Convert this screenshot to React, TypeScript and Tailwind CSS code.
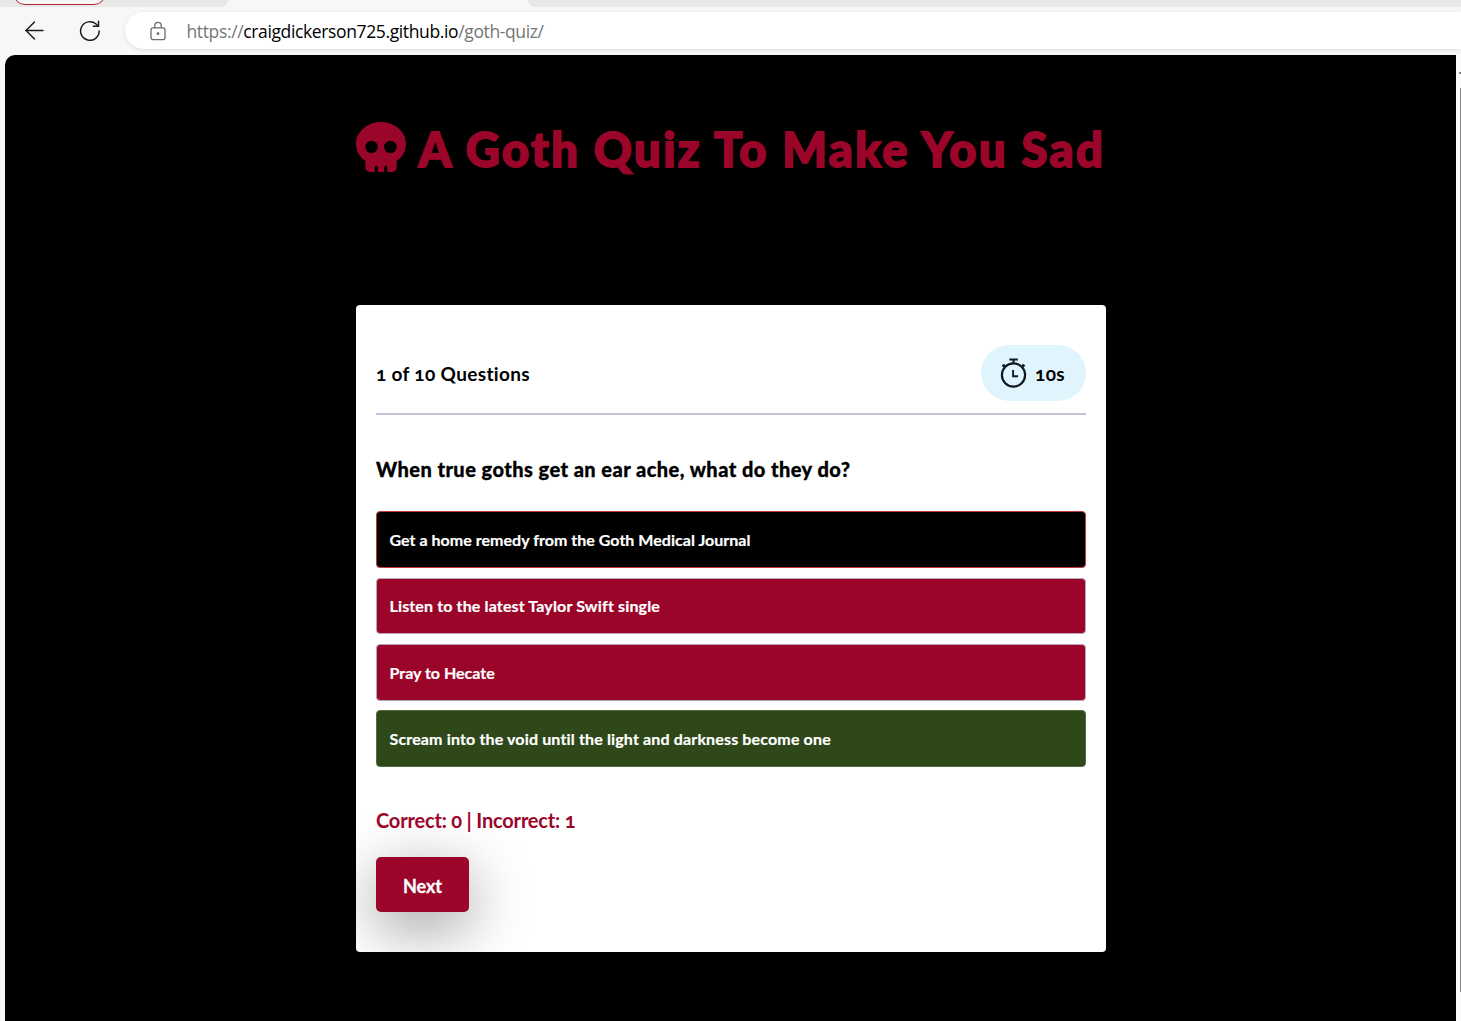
import { ArrowLeft } from "lucide-react";
import { FaSkull } from "react-icons/fa6";

const options = [
  { text: "Get a home remedy from the Goth Medical Journal", box: "bg-black border-[#c03a40]", spacing: "tracking-[0.03px]" },
  { text: "Listen to the latest Taylor Swift single", box: "bg-[#9b0529] border-[#b9a4bd]", spacing: "tracking-[0.14px]" },
  { text: "Pray to Hecate", box: "bg-[#9b0529] border-[#b9a4bd]", spacing: "tracking-[0px]" },
  { text: "Scream into the void until the light and darkness become one", box: "bg-[#2f481a] border-[#526b42]", spacing: "tracking-[0.15px]" },
];

function Reload() {
  return (
    <svg className="h-[22px] w-[22px]" viewBox="0 0 22 22" fill="none" stroke="#1b1b1b" strokeWidth="1.5" strokeLinecap="round" strokeLinejoin="round">
      <path d="M20.2 11A9.3 9.3 0 1 1 17 4L19.5 6.3" />
      <path d="M19.5 1.3V6.3H14.3" />
    </svg>
  );
}

function BackArrow() {
  return <ArrowLeft className="mt-[4px] ml-[20px] h-[29px] w-[29px]" color="#1b1b1b" strokeWidth={1.2} />;
}

function Lock() {
  return (
    <svg className="h-5 w-4" viewBox="0 0 16 20" fill="none" stroke="#6a6a6a" strokeWidth="1.3">
      <rect x="1" y="6.8" width="14" height="11.8" rx="2" />
      <path d="M4.8 6.8V4.5a3.2 3.2 0 0 1 6.4 0v2.3" />
      <circle cx="8" cy="12.6" r="0.8" fill="#6a6a6a" />
    </svg>
  );
}

function Stopwatch() {
  return (
    <svg className="h-[30px] w-[27px]" viewBox="0 0 27 30" fill="none" stroke="#111820">
      <circle cx="13.5" cy="17" r="11.6" strokeWidth="2.2" />
      <path d="M9.3 1.5h8.5M13.5 1.5v4" strokeWidth="2" />
      <path d="M2.5 8.6L4.9 6.7M22.1 6.7l2.4 1.9" strokeWidth="2.6" />
      <path d="M13.1 12v6.2h5" strokeWidth="1.9" />
    </svg>
  );
}

export default function App() {
  return (
    <div className="flex h-[1021px] w-[1461px] flex-col overflow-hidden bg-[#f7f7f7] font-['Lato',sans-serif]">
      <div className="flex h-[7px] shrink-0 justify-between bg-[#f7f7f7]">
        <div className="h-[7px] w-[228px] overflow-hidden rounded-br-[8px] bg-[#e8e8e8] pl-[13px]">
          <div className="-mt-[20px] h-[25px] w-[93px] rounded-[12px] border-[1.5px] border-[#b3272d] bg-[#f7f7f7]" />
        </div>
        <div className="h-[7px] w-[933px] rounded-bl-[10px] bg-[#e8e8e8]" />
      </div>
      <header className="flex h-12 shrink-0 items-start pt-[5px]">
        <BackArrow />
        <div className="mt-[8px] ml-[30px]"><Reload /></div>
        <div className="ml-[24px] flex h-[37px] flex-1 items-center rounded-l-full bg-white pl-[24.5px] shadow-[0_1px_4px_rgba(0,0,0,0.1)]">
          <Lock />
          <span className="ml-[21px] font-['Open_Sans',sans-serif] text-[17.5px] leading-6 tracking-[-0.37px] whitespace-nowrap text-[#767676]">
            https://<span className="text-black">craigdickerson725.github.io</span>/goth-quiz/
          </span>
        </div>
      </header>
      <div className="flex flex-1 pl-[5px]">
        <main className="w-[1451px] rounded-tl-[10px] bg-black pl-[351px]">
          <h1 className="flex h-[250.4px] items-start pt-[67px] text-[#9b0529]">
            <FaSkull className="h-[50px] w-[50px] shrink-0" />
            <span className="ml-[12.5px] text-[47px] leading-[54px] font-black tracking-[2.4px] whitespace-nowrap [-webkit-text-stroke:1.8px_#9b0529]">A Goth Quiz To Make You Sad</span>
          </h1>
          <section className="h-[646.6px] w-[750px] overflow-hidden rounded bg-white px-5 pt-[39.9px]">
            <div className="flex h-[70px] items-start justify-between border-b-2 border-[#c5c1d6]">
              <p className="pt-[17px] text-[19px] leading-6 font-bold tracking-[0.35px] [font-variant-numeric:oldstyle-nums]">1 of 10 Questions</p>
              <div className="flex h-[56px] w-[105px] items-center rounded-[28px] bg-[#e0f4fe] pl-[19px]">
                <Stopwatch />
                <span className="ml-2 pt-[2px] text-[19px] leading-6 font-bold tracking-[0.4px] [font-variant-numeric:oldstyle-nums]">10s</span>
              </div>
            </div>
            <h2 className="mt-[42px] text-[20px] leading-6 font-black tracking-[0.45px] whitespace-nowrap [-webkit-text-stroke:0.3px_#000]">When true goths get an ear ache, what do they do?</h2>
            <ul className="mt-[30px] flex flex-col gap-[9.8px]">
              {options.map((option) => (
                <li key={option.text} className={`flex h-[56.6px] items-center rounded-[4px] border pt-px pl-[12.5px] ${option.box}`}>
                  <span className={`text-[16px] leading-5 font-bold whitespace-nowrap text-white [-webkit-text-stroke:0.2px_#fff] ${option.spacing}`}>{option.text}</span>
                </li>
              ))}
            </ul>
            <p className="mt-[41px] text-[20px] leading-6 font-bold tracking-[-0.18px] text-[#9b0529] [font-variant-numeric:oldstyle-nums]">Correct: 0 | Incorrect: 1</p>
            <button className="mt-[25px] flex h-[55px] w-[93px] items-center justify-center rounded-[5px] bg-[#9b0529] pt-[2px] text-[18px] leading-6 font-bold text-white shadow-[0_16px_60px_rgba(0,0,0,0.4)] [-webkit-text-stroke:0.3px_#fff]">Next</button>
          </section>
        </main>
        <div className="flex flex-1 flex-col items-end bg-[#fafafa]">
          <div className="mt-[17px] h-[2px] w-[2px] bg-[#858585]" />
          <div className="mt-[14px] h-[904px] w-px bg-[#858585]" />
        </div>
      </div>
    </div>
  );
}
